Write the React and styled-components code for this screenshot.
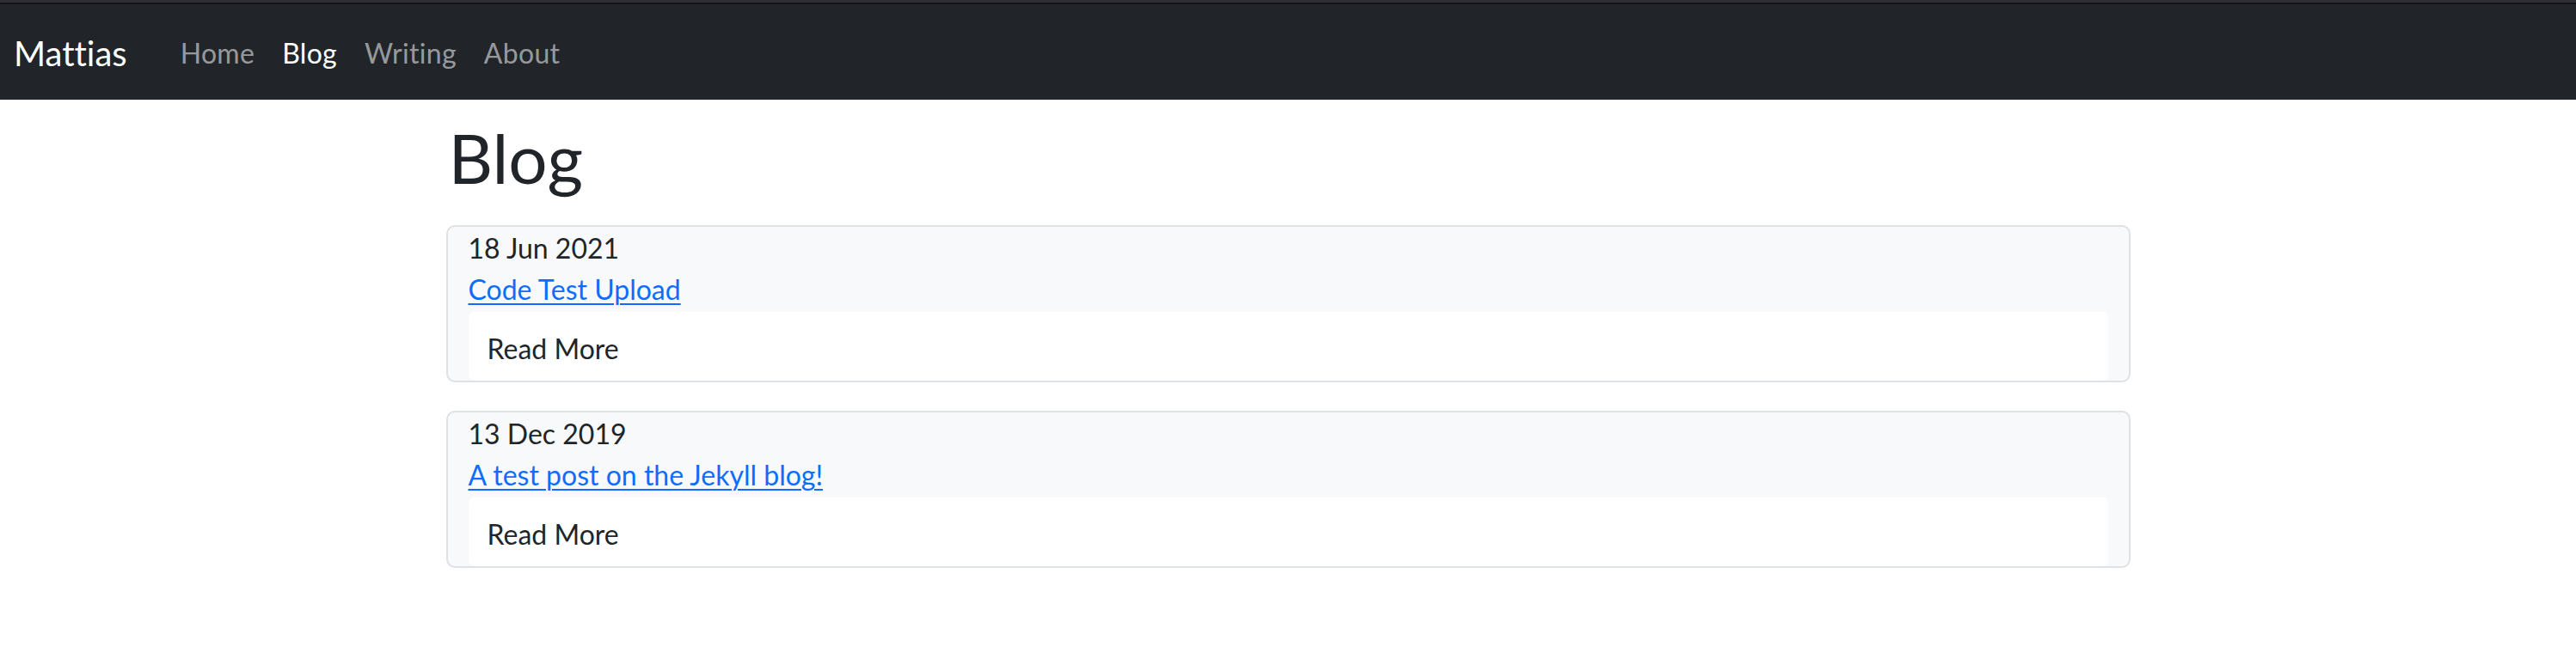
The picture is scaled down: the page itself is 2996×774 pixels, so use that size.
import React from "react";
import styled, { createGlobalStyle } from "styled-components";

const Global = createGlobalStyle`
  html, body { margin: 0; padding: 0; background: #ffffff; }
  body {
    font-family: Lato, "Open Sans", sans-serif;
    color: #212529;
    font-variant-ligatures: none;
    font-feature-settings: "liga" 0, "clig" 0;
  }
  * { box-sizing: border-box; }
`;

const TopStrip = styled.div`
  height: 5px;
  background: #2d2f34;
  border-bottom: 2px solid #121315;
`;

const Navbar = styled.nav`
  height: 111px;
  background: #212529;
  display: flex;
  align-items: center;
  padding: 3px 0 0 16px;
`;

const Brand = styled.a`
  font-size: 40px;
  line-height: 60px;
  color: #ffffff;
  text-decoration: none;
  margin-right: 46px;
`;

const NavList = styled.div`
  display: flex;
  align-items: center;
`;

const NavLink = styled.a`
  font-size: 32px;
  line-height: 48px;
  letter-spacing: 0.3px;
  padding: 0 16px;
  text-decoration: none;
  color: ${(p) => (p.$active ? "#ffffff" : "rgba(255,255,255,0.55)")};
`;

const Container = styled.main`
  width: 1959px;
  margin: 0 auto;
`;

const Title = styled.h1`
  margin: 19px 0 31px 3px;
  font-size: 80px;
  font-weight: 400;
  line-height: 96px;
  color: #212529;
`;

const Card = styled.article`
  background: #f8f9fa;
  border: 2px solid #dee2e6;
  border-radius: 10px;
  padding: 1px 24px 0 24px;
  margin-bottom: 33px;
  font-size: 32px;
  line-height: 48px;
`;

const PostDate = styled.div`
  color: #212529;
`;

const PostLink = styled.a`
  display: inline-block;
  color: #0d6efd;
  text-decoration: underline;
  text-underline-offset: 4px;
  text-decoration-thickness: 2px;
`;

const ReadMore = styled.div`
  margin-top: 2px;
  background: #ffffff;
  border-radius: 7px;
  padding: 19px 22px 13px;
  color: #212529;
`;

const posts = [
  { date: "18 Jun 2021", title: "Code Test Upload" },
  { date: "13 Dec 2019", title: "A test post on the Jekyll blog!" },
];

export default function App() {
  return (
    <>
      <Global />
      <TopStrip />
      <Navbar>
        <Brand href="#">Mattias</Brand>
        <NavList>
          <NavLink href="#">Home</NavLink>
          <NavLink href="#" $active>Blog</NavLink>
          <NavLink href="#">Writing</NavLink>
          <NavLink href="#">About</NavLink>
        </NavList>
      </Navbar>
      <Container>
        <Title>Blog</Title>
        {posts.map((p) => (
          <Card key={p.title}>
            <PostDate>{p.date}</PostDate>
            <div>
              <PostLink href="#">{p.title}</PostLink>
            </div>
            <ReadMore>Read More</ReadMore>
          </Card>
        ))}
      </Container>
    </>
  );
}
